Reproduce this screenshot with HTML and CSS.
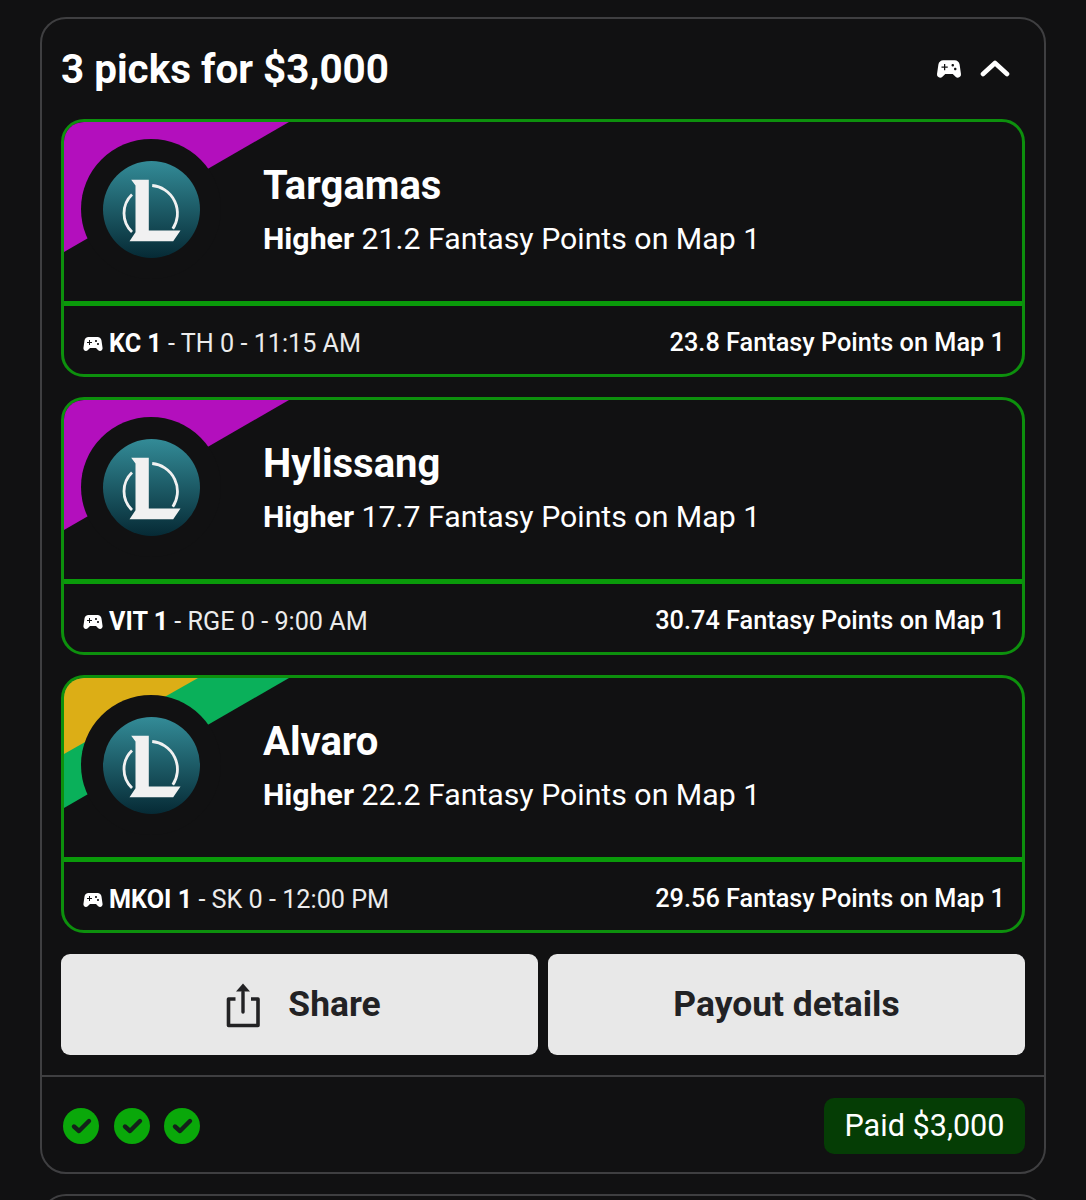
FILE: index.html
```html
<!DOCTYPE html>
<html lang="en">
<head>
<meta charset="utf-8">
<title>Entry</title>
<link rel="stylesheet" href="styles.css">
</head>
<body>
<svg class="defs" width="0" height="0" aria-hidden="true">
  <defs>
    <linearGradient id="lol" x1="0" y1="0" x2="0" y2="1">
      <stop offset="0" stop-color="#338b97"/>
      <stop offset="1" stop-color="#062a35"/>
    </linearGradient>
    <symbol id="pad" viewBox="0 0 24 24">
      <path fill="currentColor" d="M21.58 16.09l-1.09-7.66C20.21 6.46 18.52 5 16.53 5H7.47C5.48 5 3.79 6.46 3.51 8.43l-1.09 7.66C2.2 17.63 3.39 19 4.94 19c.68 0 1.32-.27 1.8-.75L9 16h6l2.25 2.25c.48.48 1.13.75 1.8.75 1.56 0 2.75-1.37 2.53-2.91zM11 11H9v2H8v-2H6v-1h2V8h1v2h2v1zm4-1c-.55 0-1-.45-1-1s.45-1 1-1 1 .45 1 1-.45 1-1 1zm2 3c-.55 0-1-.45-1-1s.45-1 1-1 1 .45 1 1-.45 1-1 1z"/>
    </symbol>
    <symbol id="league" viewBox="0 0 97 97">
      <circle cx="48.5" cy="48.5" r="48.5" fill="url(#lol)"/>
      <path fill="#f1f1f1" d="M28.2 18.8H45.8V69.5H77.5L70.2 80.2H26.5L32.5 71.2V24.5Z"/>
      <path fill="none" stroke="#f1f1f1" stroke-width="2.8" d="M49.2 24.5A28 28 0 0 1 69.8 67.8M29 33.5A26 26 0 0 0 29 71"/>
    </symbol>
    <symbol id="check" viewBox="0 0 36 36">
      <circle cx="18" cy="18" r="18" fill="#0aa80a"/>
      <path fill="none" stroke="#14211a" stroke-width="4.4" stroke-linecap="round" stroke-linejoin="round" d="M11 18.5L16 23L26 13"/>
    </symbol>
  </defs>
</svg>

<section class="entry">
  <header class="entry-head">
    <h1 class="entry-title">3 picks for $3,000</h1>
    <div class="entry-tools">
      <svg class="tool-pad"><use href="#pad"/></svg>
      <svg class="tool-chevron" viewBox="0 0 30 18"><path d="M3 15L15 4L27 15"/></svg>
    </div>
  </header>

  <div class="picks">
    <article class="pick">
      <div class="pick-main">
        <div class="ribbon ribbon-purple"></div>
        <div class="logo-ring"><svg class="logo"><use href="#league"/></svg></div>
        <div class="pick-info">
          <h2 class="pick-name">Targamas</h2>
          <p class="pick-line"><b>Higher</b> 21.2 Fantasy Points on Map 1</p>
        </div>
      </div>
      <div class="pick-foot">
        <div class="match"><svg class="match-pad"><use href="#pad"/></svg><b>KC 1</b>&nbsp;- TH 0 - 11:15 AM</div>
        <div class="result">23.8 Fantasy Points on Map 1</div>
      </div>
    </article>

    <article class="pick">
      <div class="pick-main">
        <div class="ribbon ribbon-purple"></div>
        <div class="logo-ring"><svg class="logo"><use href="#league"/></svg></div>
        <div class="pick-info">
          <h2 class="pick-name">Hylissang</h2>
          <p class="pick-line"><b>Higher</b> 17.7 Fantasy Points on Map 1</p>
        </div>
      </div>
      <div class="pick-foot">
        <div class="match"><svg class="match-pad"><use href="#pad"/></svg><b>VIT 1</b>&nbsp;- RGE 0 - 9:00 AM</div>
        <div class="result">30.74 Fantasy Points on Map 1</div>
      </div>
    </article>

    <article class="pick">
      <div class="pick-main">
        <div class="ribbon ribbon-green"></div>
        <div class="ribbon ribbon-gold"></div>
        <div class="logo-ring"><svg class="logo"><use href="#league"/></svg></div>
        <div class="pick-info">
          <h2 class="pick-name">Alvaro</h2>
          <p class="pick-line"><b>Higher</b> 22.2 Fantasy Points on Map 1</p>
        </div>
      </div>
      <div class="pick-foot">
        <div class="match"><svg class="match-pad"><use href="#pad"/></svg><b>MKOI 1</b>&nbsp;- SK 0 - 12:00 PM</div>
        <div class="result">29.56 Fantasy Points on Map 1</div>
      </div>
    </article>
  </div>

  <div class="actions">
    <button class="action action-share" type="button">
      <svg class="share-icon" viewBox="0 0 34 46">
        <path class="share-box" d="M9.5 17H2.5V43.5H32V17H25"/>
        <path class="share-stem" d="M17 10V30"/>
        <path class="share-head" d="M10 9.5L17 1.5L24 9.5Z"/>
      </svg>
      <span>Share</span>
    </button>
    <button class="action" type="button"><span>Payout details</span></button>
  </div>

  <footer class="entry-foot">
    <div class="checks">
      <svg class="check"><use href="#check"/></svg>
      <svg class="check"><use href="#check"/></svg>
      <svg class="check"><use href="#check"/></svg>
    </div>
    <div class="paid">Paid $3,000</div>
  </footer>
</section>

<section class="entry entry-next"></section>
</body>
</html>
```

FILE: styles.css
```css
* { box-sizing: border-box; }
html, body { height: 1200px; overflow: hidden; }
body {
  margin: 0;
  padding: 17px 40px 0;
  background: #111112;
  color: #fff;
  font-family: Roboto, "Liberation Sans", sans-serif;
}
.defs { position: absolute; }

.entry {
  border: 2px solid #3f3f41;
  border-radius: 26px;
  background: #111112;
}
.entry-next { margin-top: 20px; height: 60px; }

.entry-head {
  height: 100px;
  padding: 0 19px;
  display: flex;
  align-items: center;
  justify-content: space-between;
}
.entry-title { margin: 0; font-size: 40.4px; font-weight: 700; }
.entry-tools { display: flex; align-items: center; gap: 16px; padding: 0 15px 2px 0; }
.tool-pad { width: 30px; height: 30px; display: block; color: #fff; margin-top: 2px; }
.tool-chevron { width: 30px; height: 18px; display: block; }
.tool-chevron path { fill: none; stroke: #fff; stroke-width: 4.6; stroke-linecap: round; stroke-linejoin: round; }

.picks { padding: 0 19px; display: flex; flex-direction: column; gap: 20px; }
.pick {
  height: 258px;
  border: 3px solid #0d900d;
  border-radius: 23px;
  overflow: hidden;
  display: flex;
  flex-direction: column;
}
.pick-main {
  position: relative;
  flex: none;
  height: 179px;
  padding: 17px 0 0 17px;
  display: flex;
  gap: 42px;
}
.ribbon { position: absolute; left: 0; top: 0; width: 225px; height: 130px; }
.ribbon-purple { background: #b30fbd; clip-path: polygon(0 0, 225px 0, 0 130px); }
.ribbon-green { background: #0ab05a; clip-path: polygon(0 0, 225px 0, 0 130px); }
.ribbon-gold { background: #dcae16; clip-path: polygon(0 0, 134px 0, 0 76px); }
.logo-ring {
  position: relative;
  width: 140px;
  height: 140px;
  border-radius: 50%;
  background: #111112;
  display: flex;
  align-items: center;
  justify-content: center;
  flex: none;
}
.logo { width: 97px; height: 97px; display: block; }
.pick-info { position: relative; padding-top: 24px; }
.pick-name { margin: 0; font-size: 40px; line-height: 46px; font-weight: 700; }
.pick-line { margin: 12px 0 0; font-size: 30.25px; line-height: 36px; font-weight: 400; white-space: nowrap; }
.pick-line b { font-weight: 700; }

.pick-foot {
  flex: 1;
  border-top: 5px solid #0a9a0a;
  padding: 7px 17px 0 17px;
  display: flex;
  align-items: center;
  justify-content: space-between;
}
.match { display: flex; align-items: center; font-size: 25.2px; font-weight: 400; color: #ececec; white-space: nowrap; }
.match b { font-weight: 700; color: #fff; }
.match-pad { width: 24px; height: 24px; margin-right: 4px; display: block; color: #fff; }
.result { font-size: 25.3px; font-weight: 500; white-space: nowrap; margin-top: -2px; }

.actions { padding: 21px 19px 20px; display: grid; grid-template-columns: 1fr 1fr; gap: 10px; }
.action {
  min-width: 0;
  height: 101px;
  border: 0;
  border-radius: 9px;
  background: #e8e8e8;
  color: #222224;
  display: flex;
  align-items: center;
  justify-content: center;
  gap: 28px;
  font-family: inherit;
  font-size: 35.4px;
  font-weight: 700;
}
.action-share { padding-left: 14px; }
.action span { margin-top: -2px; }
.share-icon { width: 34px; height: 46px; display: block; }
.share-box { fill: none; stroke: #222224; stroke-width: 3.6; stroke-linejoin: round; }
.share-stem { fill: none; stroke: #222224; stroke-width: 3.4; stroke-linecap: round; }
.share-head { fill: #222224; }

.entry-foot {
  height: 97px;
  border-top: 2px solid #3f3f41;
  padding: 2px 19px 0;
  display: flex;
  align-items: center;
  justify-content: space-between;
}
.checks { display: flex; gap: 14.5px; margin-left: 2px; }
.check { width: 36px; height: 36px; display: block; }
.paid {
  height: 56px;
  padding: 0 20.5px;
  border-radius: 10px;
  background: #053d05;
  display: flex;
  align-items: center;
  font-size: 30.6px;
  color: #fff;
}
```
